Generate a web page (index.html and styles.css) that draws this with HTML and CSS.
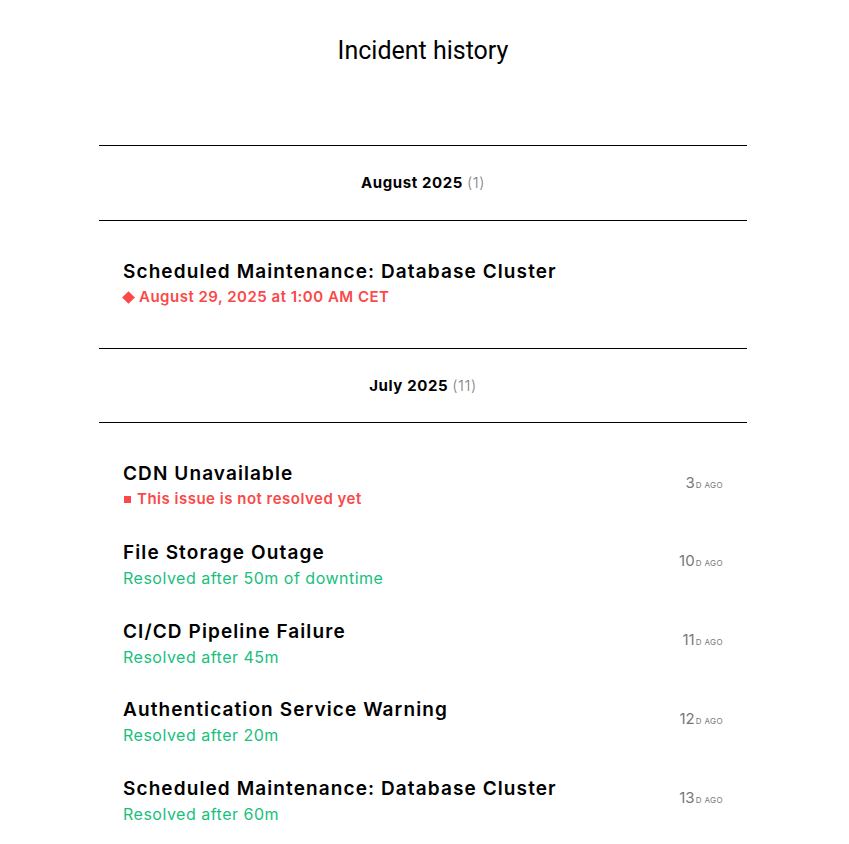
FILE: index.html
```html
<!DOCTYPE html>
<html>
<head>
<meta charset="utf-8">
<link rel="stylesheet" href="styles.css">
</head>
<body>
<main class="page">
  <h1 class="page-title">Incident history</h1>
  <section class="month">
    <div class="month-head"><span class="month-name">August 2025</span> <span class="month-count">(1)</span></div>
    <div class="month-body month-body-single">
      <div class="incident">
        <div class="incident-main">
          <div class="incident-title">Scheduled Maintenance: Database Cluster</div>
          <div class="incident-sub sub-red sub-bold"><span class="diamond"></span>August 29, 2025 at 1:00 AM CET</div>
        </div>
      </div>
    </div>
  </section>
  <section class="month">
    <div class="month-head month-head-second"><span class="month-name">July 2025</span> <span class="month-count">(11)</span></div>
    <div class="month-body">
      <div class="incident">
        <div class="incident-main">
          <div class="incident-title">CDN Unavailable</div>
          <div class="incident-sub sub-red sub-bold"><span class="square"></span>This issue is not resolved yet</div>
        </div>
        <div class="ago"><span class="ago-num">3</span><span class="ago-unit">d ago</span></div>
      </div>
      <div class="incident">
        <div class="incident-main">
          <div class="incident-title">File Storage Outage</div>
          <div class="incident-sub sub-green">Resolved after 50m of downtime</div>
        </div>
        <div class="ago"><span class="ago-num">10</span><span class="ago-unit">d ago</span></div>
      </div>
      <div class="incident">
        <div class="incident-main">
          <div class="incident-title">CI/CD Pipeline Failure</div>
          <div class="incident-sub sub-green">Resolved after 45m</div>
        </div>
        <div class="ago"><span class="ago-num">11</span><span class="ago-unit">d ago</span></div>
      </div>
      <div class="incident">
        <div class="incident-main">
          <div class="incident-title">Authentication Service Warning</div>
          <div class="incident-sub sub-green">Resolved after 20m</div>
        </div>
        <div class="ago"><span class="ago-num">12</span><span class="ago-unit">d ago</span></div>
      </div>
      <div class="incident">
        <div class="incident-main">
          <div class="incident-title">Scheduled Maintenance: Database Cluster</div>
          <div class="incident-sub sub-green">Resolved after 60m</div>
        </div>
        <div class="ago"><span class="ago-num">13</span><span class="ago-unit">d ago</span></div>
      </div>
    </div>
  </section>
</main>
</body>
</html>
```
FILE: styles.css
```css
html, body {
  margin: 0;
  padding: 0;
  background: #ffffff;
  color: #000;
}
body {
  font-family: "Inter", "Noto Sans", sans-serif;
  padding-right: 3px;
}
.page {
  width: 648px;
  margin: 0 auto;
  padding-top: 34px;
}
.page-title {
  font-family: "Roboto", sans-serif;
  font-weight: 400;
  font-size: 25px;
  line-height: 34px;
  text-align: center;
  margin: 0 0 77px 0;
}
.month-head {
  border-top: 1px solid #000;
  border-bottom: 1px solid #000;
  height: 73px;
  display: flex;
  align-items: center;
  justify-content: center;
  gap: 4px;
  font-size: 15px;
  letter-spacing: 0.6px;
  padding-bottom: 1px;
  box-sizing: content-box;
}
.month-head-second {
  height: 72px;
}
.month-name {
  font-weight: 700;
}
.month-count {
  color: #808080;
  font-weight: 300;
}
.month-body {
  padding: 37px 24px 0 24px;
}
.month-body-single {
  padding-top: 37px;
  padding-bottom: 38px;
}
.incident {
  display: flex;
  align-items: center;
  justify-content: space-between;
  height: 52px;
  margin-bottom: 26.75px;
}
.month-body-single .incident {
  margin-bottom: 0;
}
.incident-title {
  font-size: 19px;
  font-weight: 600;
  line-height: 26px;
  letter-spacing: 1.1px;
}
.incident-sub {
  font-size: 16px;
  line-height: 24px;
  letter-spacing: 0.5px;
  display: flex;
  align-items: center;
}
.sub-bold {
  font-size: 15px;
  font-weight: 600;
  letter-spacing: 0.5px;
}
.sub-red {
  color: #fb4848;
}
.sub-green {
  color: #17c07d;
}
.diamond {
  width: 9px;
  height: 9px;
  background: #fb4848;
  transform: rotate(45deg);
  margin: 0 6px 0 1px;
}
.square {
  width: 7px;
  height: 7px;
  background: #fb4848;
  margin: 0 6px 0 1px;
}
.ago {
  color: #777;
  display: flex;
  align-items: baseline;
  margin-bottom: 8px;
}
.ago-num {
  font-size: 15px;
}
.ago-unit {
  font-size: 8px;
  text-transform: uppercase;
  letter-spacing: 0.4px;
  margin-left: 1px;
}
```
